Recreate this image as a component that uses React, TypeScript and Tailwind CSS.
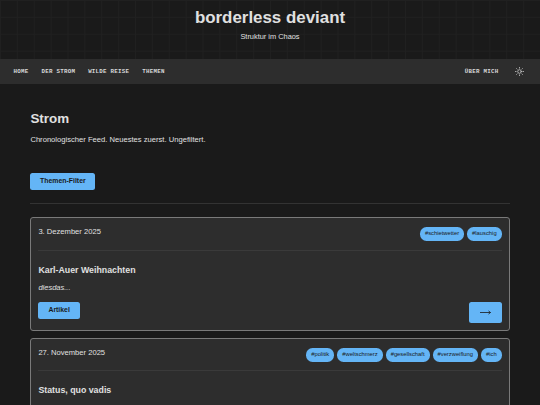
import type { ReactNode } from "react";

function Tag({ children }: { children: ReactNode }) {
  return (
    <span className="flex h-[14px] items-center rounded-[6.5px] bg-[#64b5f6] px-[5px] text-[5.8px] leading-none text-[#1a1a1a]">
      {children}
    </span>
  );
}

function Card({ date, title, tags, children }: { date: string; title: string; tags: string[]; children?: ReactNode }) {
  return (
    <article className="h-[113.5px] rounded-[3px] border border-[#7a7a7a] bg-[#2d2d2d] px-[7px]">
      <div className="flex h-[32.5px] items-start justify-between border-b border-[#3a3a3a] pt-[9px]">
        <time className="text-[7.6px] leading-[9px]">{date}</time>
        <div className="flex gap-[3px]">
          {tags.map((t) => (
            <Tag key={t}>{t}</Tag>
          ))}
        </div>
      </div>
      <h2 className="mt-[14px] text-[8.8px] leading-[10px] font-bold">{title}</h2>
      {children}
    </article>
  );
}

const navLink = "text-[5.8px] leading-none font-bold tracking-[0.26px] text-[#d8d8d8]";

export default function App() {
  return (
    <div className="h-[405px] w-[540px] overflow-hidden bg-[#1a1a1a] font-['Liberation_Sans',Arial,sans-serif] whitespace-nowrap text-[#e0e0e0]">
      <header className="h-[59px] bg-[linear-gradient(#202020_1px,transparent_1px),linear-gradient(90deg,#202020_1px,transparent_1px)] bg-[size:16.875px_16.875px] pt-[7.5px] text-center">
        <h1 className="text-[16.9px] leading-[20px] font-bold">borderless deviant</h1>
        <p className="mt-[4px] text-[7.4px] leading-[9px]">Struktur im Chaos</p>
      </header>
      <nav className="flex h-[25px] items-center bg-[#2d2d2d] pr-[16.5px] pl-[13.5px] font-['Liberation_Mono','Courier_New',monospace]">
        <div className="flex gap-[13px]">
          <a className={navLink}>HOME</a>
          <a className={navLink}>DER STROM</a>
          <a className={navLink}>WILDE REISE</a>
          <a className={navLink}>THEMEN</a>
        </div>
        <a className={`${navLink} ml-auto`}>ÜBER MICH</a>
        <svg className="ml-[16px] size-[9px]" viewBox="0 0 24 24" fill="none" stroke="#d0d0d0" strokeWidth="2" strokeLinecap="round">
          <circle cx="12" cy="12" r="4.8" />
          <path d="M12 1v2M12 21v2M4.2 4.2l1.4 1.4M18.4 18.4l1.4 1.4M1 12h2M21 12h2M4.2 19.8l1.4-1.4M18.4 5.6l1.4-1.4" />
        </svg>
      </nav>
      <main className="px-[30.4px] pt-[26px]">
        <h1 className="text-[13.4px] leading-[17px] font-bold">Strom</h1>
        <p className="mt-[8px] text-[7.62px] leading-[9px]">Chronologischer Feed. Neuestes zuerst. Ungefiltert.</p>
        <button className="mt-[28.5px] flex h-[17.5px] w-[65px] items-center justify-center rounded-[2.5px] bg-[#64b5f6] text-[6.9px] font-bold text-[#1a1a1a]">
          Themen-Filter
        </button>
        <hr className="mt-[13px] border-[#333333]" />
        <section className="mt-[13px] flex flex-col gap-[7px]">
          <Card date="3. Dezember 2025" title="Karl-Auer Weihnachten" tags={["#schietwetter", "#lauschig"]}>
            <p className="mt-[8.5px] text-[7.5px] leading-[9px] italic">diesdas...</p>
            <div className="mt-[9.5px] flex items-start justify-between">
              <a className="flex h-[17px] w-[41.5px] items-center justify-center rounded-[2.5px] bg-[#64b5f6] text-[6.9px] font-bold text-[#1a1a1a]">Artikel</a>
              <a className="flex h-[21px] w-[32.5px] items-center justify-center rounded-[2.5px] bg-[#64b5f6]">
                <svg className="h-[5px] w-[11px]" viewBox="0 0 11 5" fill="none" stroke="#1a1a1a" strokeWidth="0.8">
                  <path d="M0 2.5h10.5M8.5 .9l2 1.6-2 1.6" />
                </svg>
              </a>
            </div>
          </Card>
          <Card date="27. November 2025" title="Status, quo vadis" tags={["#politik", "#weltschmerz", "#gesellschaft", "#verzweiflung", "#ich"]} />
        </section>
      </main>
    </div>
  );
}
